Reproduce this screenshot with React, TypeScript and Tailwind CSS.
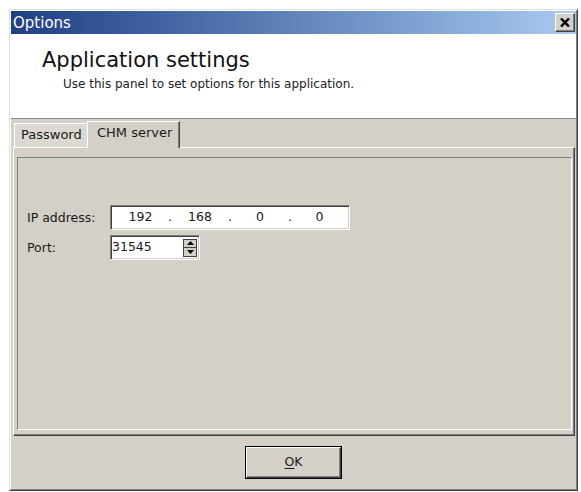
import type { ReactNode } from "react";

// Classic raised / sunken bevels used across the dialog
const raised =
  "border border-t-white border-l-white border-r-[#404040] border-b-[#404040] shadow-[inset_-1px_-1px_0_#808080]";
const sunken =
  "border border-t-[#808080] border-l-[#808080] border-r-white border-b-white shadow-[inset_1px_1px_0_#404040,inset_-1px_-1px_0_#d4d0c8]";

function CloseBox() {
  return (
    <button
      type="button"
      className={`flex h-[19px] w-[20px] items-center justify-center bg-[#d4d0c8] ${raised}`}
    >
      <svg width="10" height="9" viewBox="0 0 10 9">
        <path d="M1 0.5 L9 8.5 M9 0.5 L1 8.5" stroke="#000" strokeWidth="2.4" />
      </svg>
    </button>
  );
}

function TitleBar() {
  return (
    <div className="flex h-[23px] items-center justify-between bg-linear-to-r from-[#213f84] to-[#a9cbf1] pl-[2px] pr-[1px]">
      <span className="pt-[1px] text-[15px] leading-[18px] text-white">Options</span>
      <CloseBox />
    </div>
  );
}

function Header() {
  return (
    <div className="h-[85px] border-b border-b-[#8c8c8c] bg-white pl-[31px] pt-[14px]">
      <div className="text-[21px] leading-[25px] text-[#111]">Application settings</div>
      <div className="ml-[21px] mt-[4px] text-[12px] leading-[15px] text-[#222]">
        Use this panel to set options for this application.
      </div>
    </div>
  );
}

function Tabs() {
  return (
    <div className="flex h-[28px] items-end pl-[3px]">
      <div className="h-[24px] w-[73px] border-l border-t border-l-white border-t-white bg-[#dcd9d2] pl-[6px] pt-[3px] text-[13px] leading-[16px]">
        Password
      </div>
      <div className="relative z-10 -mb-px h-[27px] w-[93px] border-l border-r border-t border-l-white border-r-[#404040] border-t-white bg-[#d4d0c8] pl-[9px] pt-[3px] text-[13px] leading-[16px] shadow-[inset_-1px_0_0_#808080]">
        CHM server
      </div>
    </div>
  );
}

function Dot() {
  return <span className="flex w-0 justify-center">.</span>;
}

function IpBox({ parts }: { parts: string[] }) {
  return (
    <div className={`flex h-[25px] w-[240px] items-center bg-white text-[12.5px] ${sunken}`}>
      <span className="w-[59px] text-center">{parts[0]}</span>
      <Dot />
      <span className="w-[60px] text-center">{parts[1]}</span>
      <Dot />
      <span className="w-[60px] text-center">{parts[2]}</span>
      <Dot />
      <span className="w-[59px] text-center">{parts[3]}</span>
    </div>
  );
}

function Spinner() {
  return (
    <div className="flex h-[18px] w-[14px] flex-col border border-[#404040] bg-[#d4d0c8]">
      <div className="flex flex-1 items-center justify-center border-b border-b-[#404040]">
        <svg width="7" height="4" viewBox="0 0 7 4">
          <path d="M3.5 0 L7 4 L0 4 Z" fill="#000" />
        </svg>
      </div>
      <div className="flex flex-1 items-center justify-center">
        <svg width="7" height="4" viewBox="0 0 7 4">
          <path d="M0 0 L7 0 L3.5 4 Z" fill="#000" />
        </svg>
      </div>
    </div>
  );
}

function PortBox({ value }: { value: string }) {
  return (
    <div
      className={`flex h-[25px] w-[90px] items-center justify-between bg-white pl-[1px] pr-[2px] text-[12.5px] ${sunken}`}
    >
      <span>{value}</span>
      <Spinner />
    </div>
  );
}

function Row({ label, children }: { label: string; children: ReactNode }) {
  return (
    <>
      <span className="text-[12.5px] leading-[15px]">{label}</span>
      {children}
    </>
  );
}

function Panel() {
  return (
    <div className="ml-[2px] mr-[1px] flex h-[289px] flex-col border border-b-[#404040] border-l-white border-r-[#404040] border-t-white pb-[5px] pl-[3px] pr-[2px] pt-[9px] shadow-[inset_-1px_-1px_0_#808080]">
      <div className="flex-1 border border-b-white border-l-[#808080] border-r-white border-t-[#808080] pl-[9px] pt-[47px]">
        <div className="grid grid-cols-[83px_auto] items-center gap-y-[5px] justify-start">
          <Row label="IP address:">
            <IpBox parts={["192", "168", "0", "0"]} />
          </Row>
          <Row label="Port:">
            <PortBox value="31545" />
          </Row>
        </div>
      </div>
    </div>
  );
}

function OkButton() {
  return (
    <button type="button" className="h-[33px] w-[97px] border border-black bg-[#d4d0c8]">
      <div className={`flex h-full items-center justify-center text-[12.5px] ${raised}`}>
        <span>
          <span className="underline underline-offset-2">O</span>K
        </span>
      </div>
    </button>
  );
}

export default function App() {
  return (
    <div className="h-[492px] w-[581px] bg-white pl-[9px] pt-[9px] font-['DejaVu_Sans',Verdana,sans-serif] text-[#1a1a1a]">
      <div className="h-[482px] w-[569px] border border-b-[#404040] border-l-[#e2e0da] border-r-[#404040] border-t-[#e2e0da] bg-[#d4d0c8]">
        <div className="flex h-full flex-col border border-b-[#808080] border-l-white border-r-[#808080] border-t-white">
          <TitleBar />
          <Header />
          <Tabs />
          <Panel />
          <div className="flex h-[53px] justify-center pt-[10px]">
            <OkButton />
          </div>
        </div>
      </div>
    </div>
  );
}
